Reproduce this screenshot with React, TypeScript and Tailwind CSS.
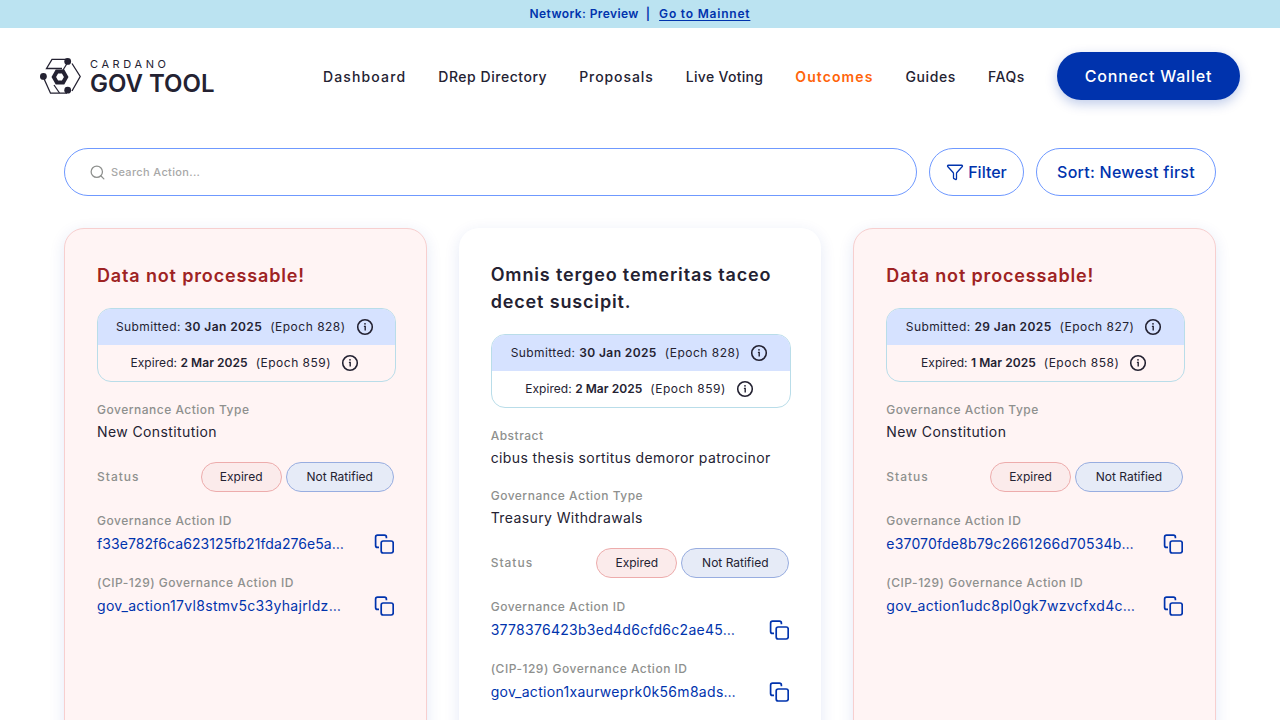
import { Search, Funnel } from 'lucide-react'

type Field = { label: string; value: string; valueClass?: string }

type Action = {
  title: string
  error?: boolean
  submitted: string
  submittedEpoch: string
  expired: string
  expiredEpoch: string
  abstract?: string
  type: string
  id: string
  idClass: string
  cipId: string
  cipClass: string
}

const actions: Action[] = [
  {
    title: 'Data not processable!',
    error: true,
    submitted: '30 Jan 2025',
    submittedEpoch: '(Epoch 828)',
    expired: '2 Mar 2025',
    expiredEpoch: '(Epoch 859)',
    type: 'New Constitution',
    id: 'f33e782f6ca623125fb21fda276e5a…',
    idClass: 'tracking-[0.07px]',
    cipId: 'gov_action17vl8stmv5c33yhajrldz…',
    cipClass: 'tracking-[0.32px]',
  },
  {
    title: 'Omnis tergeo temeritas taceo decet suscipit.',
    submitted: '30 Jan 2025',
    submittedEpoch: '(Epoch 828)',
    expired: '2 Mar 2025',
    expiredEpoch: '(Epoch 859)',
    abstract: 'cibus thesis sortitus demoror patrocinor',
    type: 'Treasury Withdrawals',
    id: '3778376423b3ed4d6cfd6c2ae45…',
    idClass: 'tracking-[0.28px]',
    cipId: 'gov_action1xaurweprk0k56m8ads…',
    cipClass: 'tracking-[0.3px]',
  },
  {
    title: 'Data not processable!',
    error: true,
    submitted: '29 Jan 2025',
    submittedEpoch: '(Epoch 827)',
    expired: '1 Mar 2025',
    expiredEpoch: '(Epoch 858)',
    type: 'New Constitution',
    id: 'e37070fde8b79c2661266d70534b…',
    idClass: 'tracking-[0.18px]',
    cipId: 'gov_action1udc8pl0gk7wzvcfxd4c…',
    cipClass: 'tracking-[0.32px]',
  },
]

const navItems = [
  { name: 'Dashboard', track: 'tracking-[1.15px]' },
  { name: 'DRep Directory', track: 'tracking-[0.53px]' },
  { name: 'Proposals', track: 'tracking-[0.93px]' },
  { name: 'Live Voting', track: 'tracking-[0.3px]' },
  { name: 'Outcomes', track: 'tracking-[1.1px]' },
  { name: 'Guides', track: 'tracking-[0.6px]' },
  { name: 'FAQs', track: 'tracking-[0.6px]' },
]

function Logo() {
  return (
    <svg width="41" height="36" viewBox="0 0 41 36" fill="none" stroke="#242232" strokeWidth="1.3">
      <path d="M27 1.4H12L6.5 10.5H22" />
      <path d="M3 18.5L10.5 35.2H27" />
      <path d="M32 5.5L40.2 18.5L32 33" />
      <path d="M14 27L19.5 35" />
      <path d="M28 4L23 12" />
      <path d="M26.2 19L23.1 13.6H16.9L13.8 19L16.9 24.4H23.1Z" strokeWidth="4" />
      <circle cx="27.7" cy="3.4" r="3.4" fill="#242232" stroke="none" />
      <circle cx="3.4" cy="18.4" r="3.4" fill="#242232" stroke="none" />
      <circle cx="27.7" cy="32.2" r="3.4" fill="#242232" stroke="none" />
    </svg>
  )
}

function InfoIcon() {
  return (
    <svg width="18" height="18" viewBox="0 0 18 18" fill="none" stroke="#242232" className="shrink-0">
      <circle cx="9" cy="9" r="7.3" strokeWidth="1.6" />
      <path d="M7.9 8.4H9.2V12.4" strokeWidth="1.4" />
      <circle cx="9" cy="5.8" r="0.9" fill="#242232" stroke="none" />
    </svg>
  )
}

function CopyIcon() {
  return (
    <svg width="20" height="20" viewBox="0 0 20 20" fill="none" stroke="#0033AD" strokeWidth="1.7" className="shrink-0">
      <path d="M5 13.4H3.6C2.4 13.4 1.6 12.6 1.6 11.4V3.2C1.6 2 2.4 1.2 3.6 1.2H10.4C11.6 1.2 12.4 2 12.4 3.2V4.2" />
      <rect x="7.2" y="7" width="12" height="12" rx="2" />
    </svg>
  )
}

function DateRow({ label, date, epoch, tinted }: { label: string; date: string; epoch: string; tinted?: boolean }) {
  return (
    <div className={`flex h-9 items-center justify-center pr-[3px] text-[12px] text-[#242232] ${tinted ? 'bg-[#D6E2FF]' : ''}`}>
      <span className={tinted ? 'tracking-[0.4px]' : 'tracking-[0.05px]'}>
        {label}: <b className="font-semibold">{date}</b>
      </span>
      <span className="ml-2 tracking-[0.5px]">{epoch}</span>
      <span className="ml-[10px]">
        <InfoIcon />
      </span>
    </div>
  )
}

function Label({ children, className = 'tracking-[0.5px]' }: { children: React.ReactNode; className?: string }) {
  return <div className={`text-[12px] leading-[18px] font-medium text-[#8E908E] ${className}`}>{children}</div>
}

function TextField({ label, value }: Field) {
  return (
    <div>
      <Label>{label}</Label>
      <div className="mt-px text-[14px] leading-6 tracking-[0.4px] text-[#242232]">{value}</div>
    </div>
  )
}

function CopyField({ label, value, valueClass }: Field) {
  return (
    <div>
      <Label>{label}</Label>
      <div className="mt-[2px] flex items-center justify-between pr-[2px]">
        <span className={`text-[14px] leading-6 whitespace-nowrap text-[#0033AD] ${valueClass}`}>{value}</span>
        <CopyIcon />
      </div>
    </div>
  )
}

function ActionCard({ action }: { action: Action }) {
  const cardTone = action.error ? 'border border-[#F7CFCF] bg-[#FFF4F4]' : 'bg-white'
  return (
    <div className={`flex min-h-[600px] flex-col rounded-[20px] pt-8 pr-[30px] pb-6 pl-8 shadow-[0_4px_16px_rgba(0,51,173,0.11)] ${cardTone}`}>
      <h2 className={`pt-px text-[18px] leading-[27px] font-semibold tracking-[0.85px] ${action.error ? 'text-[#9E2323]' : 'text-[#242232]'}`}>
        {action.title}
      </h2>
      <div className="mt-[19px] overflow-hidden rounded-[14px] border border-[#B9DDE9]">
        <DateRow tinted label="Submitted" date={action.submitted} epoch={action.submittedEpoch} />
        <DateRow label="Expired" date={action.expired} epoch={action.expiredEpoch} />
      </div>
      <div className="mt-[19px] flex flex-col gap-[18px]">
        {action.abstract && (
          <div className="-mb-px">
            <TextField label="Abstract" value={action.abstract} />
          </div>
        )}
        <TextField label="Governance Action Type" value={action.type} />
        <div className="flex h-[30px] items-center justify-between">
          <Label className="tracking-[1px]">Status</Label>
          <div className="flex gap-1 pr-[2px]">
            <span className="flex h-[30px] w-[81px] items-center justify-center rounded-full border border-[#EDACAC] bg-[#FBEBEB] text-[12px] text-[#242232]">
              Expired
            </span>
            <span className="flex h-[30px] w-[108px] items-center justify-center rounded-full border border-[#98ADE0] bg-[#E6EBF7] text-[12px] text-[#242232]">
              Not Ratified
            </span>
          </div>
        </div>
        <div className="mt-[2px]">
          <CopyField label="Governance Action ID" value={action.id} valueClass={action.idClass} />
        </div>
        <CopyField label="(CIP-129) Governance Action ID" value={action.cipId} valueClass={action.cipClass} />
      </div>
    </div>
  )
}

export default function App() {
  return (
    <main className="h-screen overflow-hidden bg-white font-['Inter',sans-serif]">
      <div className="flex h-7 items-center justify-center bg-[#BBE3F1] text-[12px] font-semibold text-[#0033AD]">
        <span className="tracking-[0.4px]">Network: Preview</span>
        <span className="ml-[7px]">|</span>
        <a className="ml-[9px] tracking-[0.8px] underline underline-offset-2">Go to Mainnet</a>
      </div>

      <header className="flex h-24 items-center justify-between px-10">
        <div className="flex items-center gap-2">
          <Logo />
          <div className="ml-px text-[#242232]">
            <div className="mt-[2px] text-[11px] leading-[11px] tracking-[3.6px]">CARDANO</div>
            <div className="mt-[2px] text-[24px] leading-[24px] font-semibold">GOV TOOL</div>
          </div>
        </div>
        <nav className="flex items-center gap-8">
          {navItems.map((item) => (
            <a
              key={item.name}
              className={`text-[14px] font-medium ${item.track} ${item.name === 'Outcomes' ? 'font-semibold text-[#FF640A]' : 'text-[#242232]'}`}
            >
              {item.name}
            </a>
          ))}
          <button className="h-12 w-[183px] rounded-full bg-[#0033AD] text-[16px] font-medium tracking-[0.8px] text-white shadow-[0_4px_12px_rgba(0,51,173,0.25)]">
            Connect Wallet
          </button>
        </nav>
      </header>

      <section className="px-16 pt-6">
        <div className="flex gap-3">
          <div className="flex h-12 flex-1 items-center rounded-full border border-[#6F99FF] pl-6">
            <Search size={17} strokeWidth={1.8} className="text-[#8E908E]" />
            <span className="ml-[5px] text-[11px] font-medium tracking-[0.35px] text-[#A8A8A8]">Search Action...</span>
          </div>
          <button className="flex h-12 w-[95px] items-center justify-center gap-1 rounded-full border border-[#6F99FF] text-[16px] font-medium text-[#0033AD]">
            <Funnel size={18} strokeWidth={1.7} />
            Filter
          </button>
          <button className="h-12 w-[180px] rounded-full border border-[#6F99FF] text-[16px] font-medium tracking-[0.25px] text-[#0033AD]">
            Sort: Newest first
          </button>
        </div>

        <div className="mt-8 grid grid-cols-3 gap-8">
          {actions.map((action, i) => (
            <ActionCard key={i} action={action} />
          ))}
        </div>
      </section>
    </main>
  )
}
